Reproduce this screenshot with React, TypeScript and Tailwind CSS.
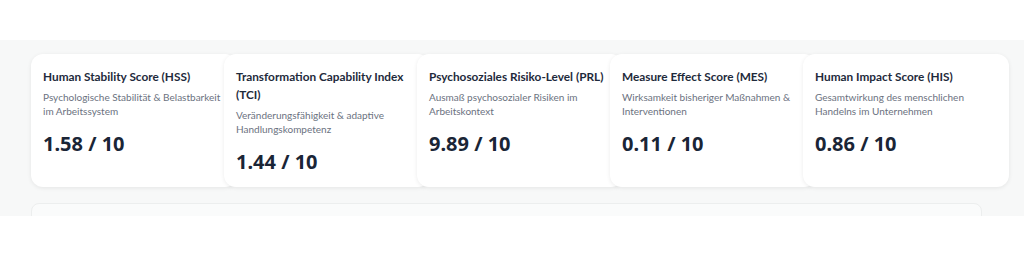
import React from 'react';

interface Score {
  title: string;
  desc: string;
  value: string;
}

const scores: Score[] = [
  { title: 'Human Stability Score (HSS)', desc: 'Psychologische Stabilität & Belastbarkeit im Arbeitssystem', value: '1.58 / 10' },
  { title: 'Transformation Capability Index (TCI)', desc: 'Veränderungsfähigkeit & adaptive Handlungskompetenz', value: '1.44 / 10' },
  { title: 'Psychosoziales Risiko-Level (PRL)', desc: 'Ausmaß psychosozialer Risiken im Arbeitskontext', value: '9.89 / 10' },
  { title: 'Measure Effect Score (MES)', desc: 'Wirksamkeit bisheriger Maßnahmen & Interventionen', value: '0.11 / 10' },
  { title: 'Human Impact Score (HIS)', desc: 'Gesamtwirkung des menschlichen Handelns im Unternehmen', value: '0.86 / 10' },
];

function ScoreCard({ title, desc, value }: Score) {
  return (
    <div className="w-[206px] h-[133px] shrink-0 bg-white rounded-xl shadow-[0_1px_4px_rgba(0,0,0,0.08)] px-3 pt-[14px] [&:not(:first-child)]:-ml-[13px]">
      <h3 className="font-['Lato',sans-serif] text-[11.8px] leading-[18px] font-bold text-[#1e2a3b]">{title}</h3>
      <p className="mt-1 font-['Lato',sans-serif] text-[10px] leading-[14px] text-[#6b7280]">{desc}</p>
      <div className="mt-3 text-[20px] leading-[28px] font-bold text-[#1a2536]">{value}</div>
    </div>
  );
}

export default function App() {
  return (
    <div className="w-[1024px] h-[256px] bg-white" style={{ fontFamily: '"Noto Sans", sans-serif' }}>
      <div className="h-[40px]" />
      <div className="h-[176px] bg-[#f7f8f8] pt-[14px] pl-[31px] overflow-hidden">
        <div className="flex">
          {scores.map((s) => (
            <ScoreCard key={s.title} {...s} />
          ))}
        </div>
        <div className="mt-[16px] w-[951px] h-[20px] rounded-t-lg border border-[#eceeee] bg-[#fafbfb]" />
      </div>
    </div>
  );
}
